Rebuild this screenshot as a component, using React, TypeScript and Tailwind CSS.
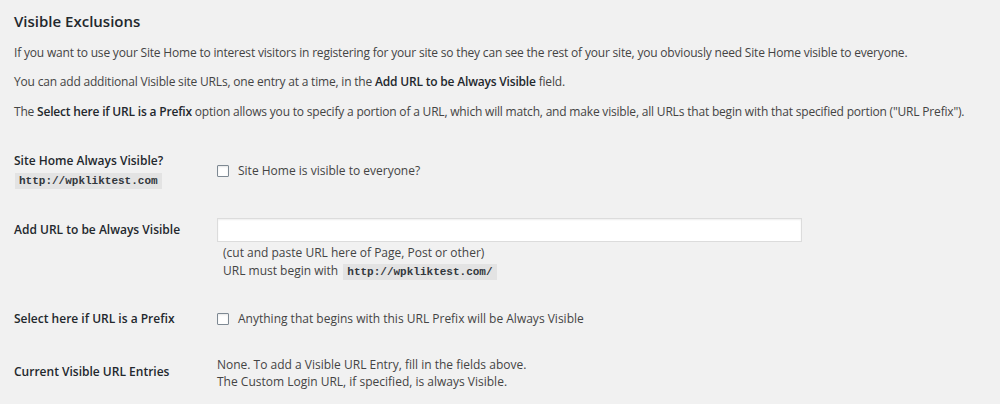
import { useState } from 'react'

function Code({ children }: { children: React.ReactNode }) {
  return (
    <code className="inline-block bg-[#e3e3e3] px-[4px] font-['Liberation_Mono',monospace] text-[11px] font-bold leading-[16px] text-[#32373c]">
      {children}
    </code>
  )
}

function Check({ label }: { label: string }) {
  const [checked, setChecked] = useState(false)
  return (
    <label className="flex items-center gap-[9px] leading-[18px]">
      <input
        type="checkbox"
        checked={checked}
        onChange={(e) => setChecked(e.target.checked)}
        className="m-0 h-[12px] w-[12px] appearance-none rounded-[1px] border border-[#7e8993] bg-white shadow-[inset_0_1px_2px_rgba(0,0,0,0.1)] checked:bg-[#2271b1]"
      />
      <span>{label}</span>
    </label>
  )
}

export default function App() {
  const [url, setUrl] = useState('')

  return (
    <div className="min-h-screen bg-[#f1f1f1] px-[14px] pt-[11px] font-['Open_Sans',sans-serif] text-[12px] text-[#444]">
      <h2 className="text-[15px] font-semibold leading-[20px] text-[#23282d]">Visible Exclusions</h2>

      <div className="tracking-[-0.19px]">
        <p className="mt-[13px] leading-[18px]">
          If you want to use your Site Home to interest visitors in registering for your site so they can see the rest of your site, you obviously need Site Home visible to everyone.
        </p>
        <p className="mt-[11px] leading-[18px]">
          You can add additional Visible site URLs, one entry at a time, in the <strong className="font-semibold text-[#23282d]">Add URL to be Always Visible</strong> field.
        </p>
        <p className="mt-[12px] whitespace-nowrap leading-[18px]">
          The <strong className="font-semibold text-[#23282d]">Select here if URL is a Prefix</strong> option allows you to specify a portion of a URL, which will match, and make visible, all URLs that begin with that specified portion ("URL Prefix").
        </p>
      </div>

      {/* Site Home */}
      <div className="mt-[31px] flex items-start">
        <div className="w-[203px]">
          <div className="font-semibold leading-[18px] text-[#23282d]">Site Home Always Visible?</div>
          <div className="mt-[1px] pl-[1px]">
            <Code>http://wpkliktest.com</Code>
          </div>
        </div>
        <div className="pt-[10px]">
          <Check label="Site Home is visible to everyone?" />
        </div>
      </div>

      {/* Add URL */}
      <div className="mt-[29px] flex items-start">
        <div className="w-[203px] pt-[3px] font-semibold leading-[18px] text-[#23282d]">Add URL to be Always Visible</div>
        <div>
          <input
            type="text"
            value={url}
            onChange={(e) => setUrl(e.target.value)}
            className="block h-[24px] w-[585px] border border-[#dcdcdc] bg-white px-2 shadow-[inset_0_1px_2px_rgba(0,0,0,0.07)] outline-none"
          />
          <div className="mt-[2px] pl-[6px] leading-[18px]">
            <div>(cut and paste URL here of Page, Post or other)</div>
            <div>
              URL must begin with <span className="ml-[2px]"><Code>http://wpkliktest.com/</Code></span>
            </div>
          </div>
        </div>
      </div>

      {/* Prefix */}
      <div className="mt-[30px] flex items-start">
        <div className="w-[203px] font-semibold leading-[18px] text-[#23282d]">Select here if URL is a Prefix</div>
        <Check label="Anything that begins with this URL Prefix will be Always Visible" />
      </div>

      {/* Current entries */}
      <div className="mt-[28px] flex items-start">
        <div className="w-[203px] pt-[7px] font-semibold leading-[18px] text-[#23282d]">Current Visible URL Entries</div>
        <div className="leading-[17px]">
          <div>None. To add a Visible URL Entry, fill in the fields above.</div>
          <div>The Custom Login URL, if specified, is always Visible.</div>
        </div>
      </div>
    </div>
  )
}
